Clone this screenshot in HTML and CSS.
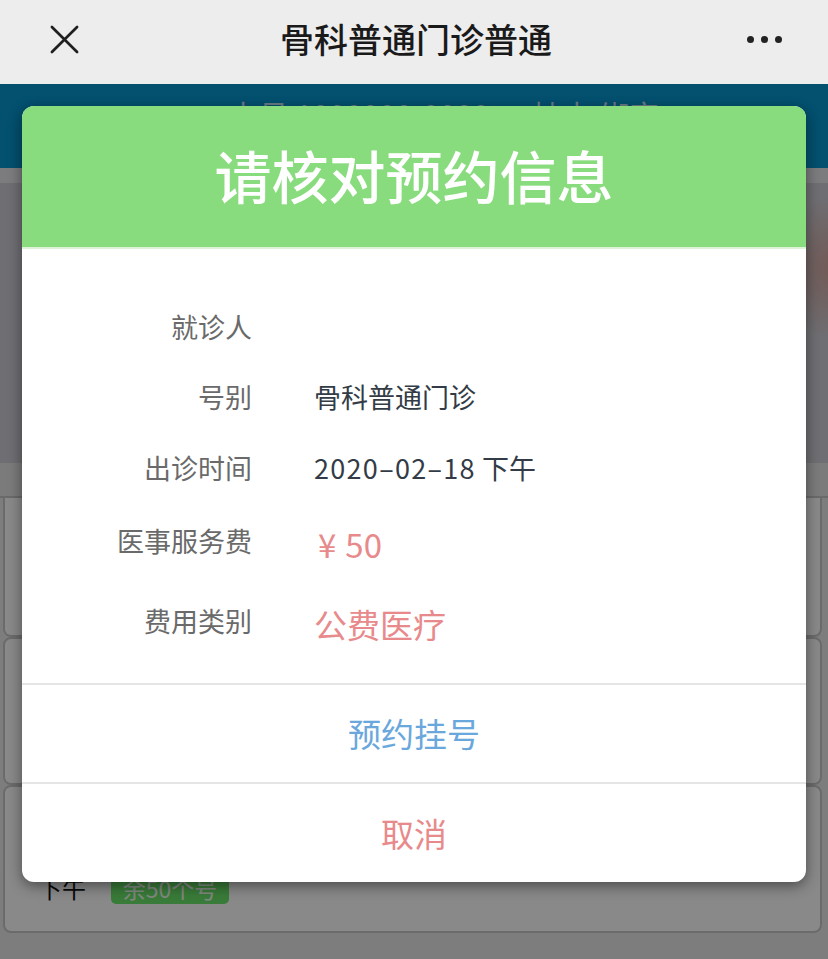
FILE: index.html
```html
<!DOCTYPE html>
<html lang="zh-CN">
<head>
<meta charset="utf-8">
<title>骨科普通门诊普通</title>
<link rel="stylesheet" href="styles.css">
</head>
<body>
<div class="app">
  <header class="nav">
    <svg class="nav-close" width="30" height="30" viewBox="0 0 30 30" aria-hidden="true">
      <path d="M2 2 L28 28 M28 2 L2 28" stroke="#1f1f1f" stroke-width="2.8" stroke-linecap="round" fill="none"/>
    </svg>
    <h1 class="nav-title">骨科普通门诊普通</h1>
    <div class="nav-more"><span></span><span></span><span></span></div>
  </header>

  <main class="page">
    <section class="card-band">
      <p class="card-band-text">卡号 1000000-0000 · 持卡 绑定</p>
    </section>
    <section class="banner"></section>
    <div class="strip"></div>
    <div class="slot slot-first"></div>
    <div class="slot"></div>
    <div class="slot">
      <div class="slot-row"><span class="slot-time">下午</span><span class="slot-badge">余50个号</span></div>
    </div>
  </main>

  <div class="mask"></div>

  <div class="modal">
    <div class="modal-head">请核对预约信息</div>
    <div class="modal-body">
      <div class="info-grid">
        <span class="info-label">就诊人</span><span class="info-value"></span>
        <span class="info-label">号别</span><span class="info-value">骨科普通门诊</span>
        <span class="info-label">出诊时间</span><span class="info-value"><span class="num">2020–02–18</span> 下午</span>
        <span class="info-label">医事服务费</span><span class="info-value info-red info-big"><span class="yen">¥</span>50</span>
        <span class="info-label">费用类别</span><span class="info-value info-red info-big">公费医疗</span>
      </div>
    </div>
    <div class="modal-btn btn-ok">预约挂号</div>
    <div class="modal-btn btn-cancel">取消</div>
  </div>
</div>
</body>
</html>
```

FILE: styles.css
```css
* { box-sizing: border-box; }
html, body { margin: 0; padding: 0; }
body {
  width: 828px;
  height: 959px;
  overflow: hidden;
  font-family: "Noto Sans CJK SC", "Noto Sans", sans-serif;
  background: #e8e8e8;
}
.app { position: relative; width: 828px; height: 959px; overflow: hidden; }

.nav {
  height: 84px;
  background: #ededed;
  display: grid;
  grid-template-columns: 1fr auto 1fr;
  align-items: center;
  padding: 0 46px 6px 50px;
}
.nav-close { width: 29px; height: 29px; }
.nav-title {
  margin: 0;
  font-size: 34px;
  font-weight: 500;
  color: #1a1a1a;
  line-height: 1;
}
.nav-more { display: flex; gap: 7px; align-items: center; justify-self: end; }
.nav-more span { width: 7px; height: 7px; border-radius: 50%; background: #222; }

.page { display: flex; flex-direction: column; }
.card-band {
  height: 84px;
  background: #0794cd;
  padding-top: 10px;
  display: flex;
  justify-content: center;
}
.card-band-text {
  margin: 0 0 0 60px;
  font-size: 30px;
  line-height: 40px;
  color: rgba(255,255,255,0.75);
}
.banner {
  height: 295px;
  background:
    linear-gradient(#e6e6ea 0, #e6e6ea 15px, transparent 15px),
    radial-gradient(ellipse 60px 70px at 835px 100px, #d2a49c 0%, rgba(210,164,156,0) 100%),
    #cdcbd2;
}
.strip {
  height: 35px;
  background: #e4e4e4;
  border-bottom: 2px solid #c4c4c4;
}
.slot {
  height: 148px;
  margin: 0 6px 0 3px;
  background: #fdfdfd;
  border: 2px solid #c6c6c6;
  border-radius: 8px;
  padding: 0 34px 27px 33px;
  display: flex;
  flex-direction: column;
  justify-content: flex-end;
}
.slot-first { height: 139px; border-top: 0; border-radius: 0 0 8px 8px; }
.slot-row { display: flex; align-items: center; gap: 25px; }
.slot-time { font-size: 24px; color: #111; line-height: 1; }
.slot-badge {
  width: 118px;
  height: 32px;
  border-radius: 5px;
  background: #6ae46a;
  color: rgba(255,255,255,0.9);
  font-size: 23px;
  display: flex;
  align-items: center;
  justify-content: center;
}

.mask {
  position: absolute;
  left: 0; right: 0; top: 84px; bottom: 0;
  background: rgba(0,0,0,0.46);
}

.modal {
  position: absolute;
  top: 106px;
  left: 22px;
  width: 784px;
  background: #fff;
  border-radius: 12px;
  overflow: hidden;
  box-shadow: 0 4px 14px rgba(0,0,0,0.45);
}
.modal-head {
  height: 143px;
  background: #88dc7d;
  border-bottom: 2px solid #dcf3d8;
  display: flex;
  align-items: center;
  justify-content: center;
  color: #fff;
  font-size: 57px;
  font-weight: 500;
  line-height: 1;
  padding-bottom: 4px;
}
.modal-body { padding: 42px 0 20px; }
.info-grid {
  display: grid;
  grid-template-columns: 230px 1fr;
  grid-template-rows: 70px 70px 72px 74px 86px;
  column-gap: 62px;
  align-items: center;
}
.info-label {
  text-align: right;
  font-size: 27px;
  color: #6a6a6a;
  line-height: 1;
}
.info-value {
  font-size: 27px;
  color: #333c46;
  line-height: 1;
}
.num { letter-spacing: 1.3px; }
.yen { margin-right: 9px; margin-left: 4px; }
.info-red { color: #e88a8c; }
.info-big { font-size: 33px; padding-top: 8px; }

.modal-btn {
  border-top: 2px solid #e5e5e5;
  display: flex;
  align-items: center;
  justify-content: center;
  font-size: 33px;
  line-height: 1;
}
.btn-ok { height: 99px; color: #6aa7dc; }
.btn-cancel { height: 100px; color: #e88a8c; }
```
